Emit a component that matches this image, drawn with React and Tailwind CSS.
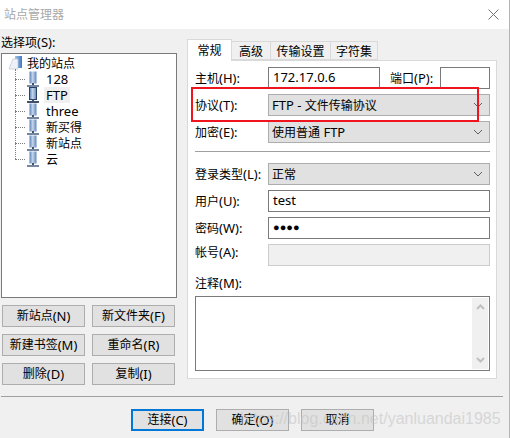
const FONT = "font-['Noto_Sans','Noto_Sans_CJK_SC',sans-serif]";

// CJK glyphs in the reference are 12px next to 13px Latin text.
function T({ children }) {
  const parts = String(children).split(/([\u3400-\u9fff]+)/);
  return (
    <>
      {parts.map((p, i) =>
        /[\u3400-\u9fff]/.test(p) ? (
          <span key={i} className="text-[12px]">{p}</span>
        ) : (
          <span key={i}>{p}</span>
        )
      )}
    </>
  );
}

function Chevron() {
  return (
    <svg width="10" height="6" viewBox="0 0 10 6" className="shrink-0">
      <path d="M1 1l4 4 4-4" fill="none" stroke="#606060" strokeWidth="1" />
    </svg>
  );
}

function SelectBox({ children }) {
  return (
    <div className="flex h-[22px] flex-1 items-center justify-between border border-[#adadad] bg-[#e1e1e1] pl-[3px] pr-[6px] text-[13px] leading-none text-black">
      <span className="whitespace-pre"><T>{children}</T></span>
      <Chevron />
    </div>
  );
}

function Field({ children, disabled }) {
  return (
    <div className={`flex h-[22px] flex-1 items-center border px-[4px] pb-px text-[13px] leading-none text-black ${disabled ? "border-[#cccccc] bg-[#f0f0f0]" : "border-[#7a7a7a] bg-white"}`}>
      {children}
    </div>
  );
}

function Row({ label, children, className = "", labelClass = "pt-[1px]" }) {
  return (
    <div className={`flex items-center ${className}`}>
      <span className={`w-[73px] shrink-0 whitespace-nowrap text-[13px] leading-none text-black ${labelClass}`}><T>{label}</T></span>
      {children}
    </div>
  );
}

function Btn({ children, primary, className = "" }) {
  return (
    <div className={`flex h-[22px] items-center justify-center bg-[#e1e1e1] text-[13px] leading-none text-black ${primary ? "border-2 border-[#0078d7]" : "border border-[#adadad]"} ${className}`}>
      <T>{children}</T>
    </div>
  );
}

function ServerIcon({ dark }) {
  return (
    <svg width="17" height="17" viewBox="0 0 17 17" className="shrink-0">
      <defs>
        <linearGradient id="srv" x1="0" x2="1" y1="0" y2="0">
          <stop offset="0" stopColor="#5a80b8" />
          <stop offset="0.45" stopColor="#c4d6ec" />
          <stop offset="1" stopColor="#5d86c0" />
        </linearGradient>
      </defs>
      <rect x="4.5" y="0.5" width="7" height="12" fill="url(#srv)" stroke={dark ? "#2a3f66" : "none"} />
      <rect x="7" y="12" width="2" height="2" fill="#40506c" />
      <rect x="2" y="14" width="12" height="2" fill={dark ? "#3f506f" : "#7488a6"} />
    </svg>
  );
}

function TreeItem({ label, selected }) {
  return (
    <div className="flex h-4 items-center pl-[13px]">
      <span className="w-[10px] shrink-0 border-t border-dotted border-[#7f7f7f]" />
      <ServerIcon dark={selected} />
      <span className={`ml-[2px] px-[2px] text-[13px] leading-4 text-black ${selected ? "bg-[#f0f0f0]" : ""}`}><T>{label}</T></span>
    </div>
  );
}

function Tab({ children, className = "" }) {
  return (
    <div className={`flex h-[19px] items-center justify-center border-y border-r border-[#d9d9d9] pt-[2px] ${className}`}><T>{children}</T></div>
  );
}

export default function App() {
  return (
    <div className={`relative flex h-[438px] w-[510px] flex-col overflow-hidden border-r border-[#b4b4b4] bg-[#f0f0f0] ${FONT}`}>
      <div className="flex h-[29px] shrink-0 items-center justify-between bg-white pl-[4px] pr-[10px]">
        <span className="text-[12px] leading-none text-[#a8a8a8]">站点管理器</span>
        <svg width="11" height="11" viewBox="0 0 11 11"><path d="M0.5 0.5l10 10M10.5 0.5l-10 10" stroke="#707070" strokeWidth="1" fill="none" /></svg>
      </div>

      <div className="flex h-[357px] shrink-0">
        <div className="flex w-[187px] shrink-0 flex-col pl-[1px]">
          <div className="mt-[5px] h-[19px] text-[13px] leading-4 text-black"><T>选择项(S):</T></div>
          <div className="h-[245px] w-[176px] border border-[#7a7a7a] bg-white pt-[1px]">
            <div className="relative">
              <div className="flex h-[16px] items-center pl-[6px]">
                <svg width="15" height="16" viewBox="0 0 15 16" className="shrink-0">
                  <defs>
                    <linearGradient id="fold" x1="0" x2="1" y1="0" y2="0">
                      <stop offset="0" stopColor="#a9c4e8" />
                      <stop offset="1" stopColor="#3f78c4" />
                    </linearGradient>
                  </defs>
                  <path d="M7 1h7v12H7z" fill="url(#fold)" />
                  <path d="M5 4h5v10H1z" fill="#eef2f7" stroke="#b4c0d0" strokeWidth="0.6" />
                </svg>
                <span className="ml-[4px] text-[13px] leading-4 text-black"><T>我的站点</T></span>
              </div>
              <span className="absolute left-[13px] top-[14px] h-[90px] border-l border-dotted border-[#7f7f7f]" />
              <TreeItem label="128" />
              <TreeItem label="FTP" selected />
              <TreeItem label="three" />
              <TreeItem label="新买得" />
              <TreeItem label="新站点" />
              <TreeItem label="云" />
            </div>
          </div>
          <div className="mt-[7px] grid w-[174px] grid-cols-[83px_83px] gap-x-[7px] gap-y-[7px] pl-px">
            <Btn>新站点(N)</Btn>
            <Btn>新文件夹(F)</Btn>
            <Btn>新建书签(M)</Btn>
            <Btn>重命名(R)</Btn>
            <Btn>删除(D)</Btn>
            <Btn>复制(I)</Btn>
          </div>
        </div>

        <div className="flex w-[310px] shrink-0 flex-col pt-[10px]">
          <div className="flex h-[21px] items-end text-[13px] leading-none text-black">
            <div className="z-10 -mb-px flex h-[22px] w-[45px] items-center justify-center border border-b-0 border-[#d9d9d9] bg-white"><T>常规</T></div>
            <Tab className="w-[39px]">高级</Tab>
            <Tab className="w-[60px]">传输设置</Tab>
            <Tab className="w-[47px]">字符集</Tab>
          </div>
          <div className="flex h-[319px] flex-col border border-[#d9d9d9] bg-white pl-[7px] pr-[6px] pt-[6px]">
            <Row label="主机(H):" labelClass="">
              <Field>172.17.0.6</Field>
              <span className="ml-[10px] w-[45px] shrink-0 whitespace-nowrap text-[13px] leading-none text-black"><T>端口(P):</T></span>
              <div className="ml-[5px] h-[22px] w-[50px] shrink-0 border border-[#7a7a7a] bg-white" />
            </Row>
            <Row label="协议(T):" className="mt-[5px]"><SelectBox>FTP - 文件传输协议</SelectBox></Row>
            <Row label="加密(E):" className="mt-[5px]"><SelectBox>使用普通 FTP</SelectBox></Row>
            <div className="mt-[8px] h-px bg-[#a0a0a0]" />
            <Row label="登录类型(L):" className="mt-[11px]"><SelectBox>正常</SelectBox></Row>
            <Row label="用户(U):" className="mt-[5px]"><Field>test</Field></Row>
            <Row label="密码(W):" className="mt-[5px]"><Field><span className="font-['Liberation_Sans',sans-serif] text-[11px]">●●●●</span></Field></Row>
            <Row label="帐号(A):" className="mt-[5px]" labelClass="pb-[6px]"><Field disabled /></Row>
            <div className="mt-[9px] text-[13px] leading-4 text-black"><T>注释(M):</T></div>
            <div className="mt-[4px] flex h-[75px] justify-end border border-[#7a7a7a] bg-white p-px">
              <div className="flex w-[16px] flex-col items-center justify-between bg-[#f0f0f0] py-[6px]">
                <svg width="9" height="6" viewBox="0 0 9 6"><path d="M1 5l3.5-3.5L8 5" fill="none" stroke="#c0c0c0" strokeWidth="2" /></svg>
                <svg width="9" height="6" viewBox="0 0 9 6"><path d="M1 1l3.5 3.5L8 1" fill="none" stroke="#c0c0c0" strokeWidth="2" /></svg>
              </div>
            </div>
          </div>
        </div>
      </div>

      <div className="ml-px mt-[10px] h-px w-[502px] bg-[#a0a0a0]" />
      <div className="mt-[12px] flex gap-[12px] pl-[131px]">
        <Btn primary className="w-[73px]">连接(C)</Btn>
        <Btn className="w-[73px]">确定(O)</Btn>
        <Btn className="w-[73px]">取消</Btn>
      </div>

      <div className="pointer-events-none absolute left-[240px] top-[411px] font-['Liberation_Sans',sans-serif] text-[16px] leading-none text-[#c4c4c4]/60">https://blog.csdn.net/yanluandai1985</div>
      <div className="pointer-events-none absolute left-[191px] top-[87px] h-[35px] w-[288px] border-2 border-[#f0141e]" />
    </div>
  );
}
